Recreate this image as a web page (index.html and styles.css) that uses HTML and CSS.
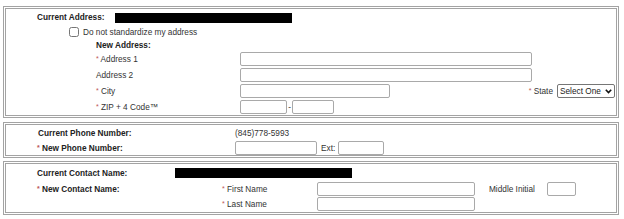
FILE: index.html
```html
<!DOCTYPE html>
<html lang="en">
<head>
  <meta charset="UTF-8">
  <title>Change Account Details</title>
  <link rel="stylesheet" href="styles.css">
</head>
<body>

<div class="page">

  <div class="panel address">
    <div class="row top-row">
      <span class="label bold cur-addr">Current Address:</span>
      <span class="redacted"></span>
    </div>
    <div class="row check-row">
      <input type="checkbox" id="nostd" class="check">
      <label for="nostd">Do not standardize my address</label>
    </div>
    <div class="row sub head-row">
      <span class="label bold">New Address:</span>
    </div>
    <div class="row sub field-row">
      <span class="label addr-label"><span class="req">*</span> Address 1</span>
      <input type="text" class="box addr">
    </div>
    <div class="row sub field-row">
      <span class="label addr-label">Address 2</span>
      <input type="text" class="box addr">
    </div>
    <div class="row sub field-row">
      <span class="label addr-label"><span class="req">*</span> City</span>
      <input type="text" class="box city">
      <span class="state"><span class="req">*</span> State</span>
      <span class="pick-wrap">
        <select class="pick">
          <option>Select One</option>
        </select>
        <svg class="chev" width="7" height="5" viewBox="0 0 7 5">
          <path d="M0.8 0.8 L3.5 3.6 L6.2 0.8" fill="none" stroke="#111" stroke-width="1.6"/>
        </svg>
      </span>
    </div>
    <div class="row sub field-row">
      <span class="label addr-label"><span class="req">*</span> ZIP + 4 Code™</span>
      <input type="text" class="box zip5">
      <span class="dash">-</span>
      <input type="text" class="box zip4">
    </div>
  </div>

  <div class="panel phone">
    <div class="row phone-cur">
      <span class="label bold phone-label">Current Phone Number:</span>
      <span>(845)778-5993</span>
    </div>
    <div class="row phone-new">
      <span class="label bold phone-label"><span class="req">*</span> New Phone Number:</span>
      <input type="text" class="box phone-box">
      <span class="ext">Ext:</span>
      <input type="text" class="box ext-box">
    </div>
  </div>

  <div class="panel contact">
    <div class="row contact-cur">
      <span class="label bold cur-contact">Current Contact Name:</span>
      <span class="redacted"></span>
    </div>
    <div class="row name-row">
      <span class="label bold contact-label"><span class="req">*</span> New Contact Name:</span>
      <span class="label name-label"><span class="req">*</span> First Name</span>
      <input type="text" class="box name-box">
      <span class="middle">Middle Initial</span>
      <input type="text" class="box mi-box">
    </div>
    <div class="row name-row last">
      <span class="label name-label"><span class="req">*</span> Last Name</span>
      <input type="text" class="box name-box">
    </div>
  </div>

</div>

</body>
</html>
```

FILE: styles.css
```css
body {
  margin: 0;
  font-family: "Liberation Sans", Arial, sans-serif;
  font-size: 8.25px;
  color: #333;
  background: #fff;
}
.page {
  padding: 6px 0 0 3px;
}
.panel {
  width: 616px;
  box-sizing: border-box;
  border: 3px double #a3a3a3;
  padding-left: 31px;
  margin-bottom: 4px;
}
.row {
  display: flex;
  align-items: center;
}
.label {
  flex: none;
}
.bold {
  font-weight: bold;
  color: #222;
}
.req {
  color: #b55;
  font-size: 7px;
  vertical-align: 1px;
}
.redacted {
  display: inline-block;
  width: 177px;
  height: 10px;
  background: #000;
}
.box {
  box-sizing: border-box;
  height: 14px;
  margin: 0;
  padding: 0 2px;
  border: 1px solid #a9a9a9;
  border-radius: 2px;
  background: #fff;
  font: inherit;
}

/* address panel */
.address {
  padding-top: 1px;
}
.top-row {
  height: 15px;
}
.cur-addr {
  width: 78px;
}
.check-row {
  height: 14px;
  padding-left: 32px;
}
.check {
  width: 10px;
  height: 10px;
  margin: 0 4px 0 0;
}
.sub {
  padding-left: 59px;
}
.head-row {
  height: 12px;
}
.field-row {
  height: 16px;
}
.addr-label {
  width: 144px;
}
.addr {
  width: 292px;
}
.city {
  width: 150px;
}
.state {
  margin-left: auto;
  margin-right: 4px;
}
.pick-wrap {
  position: relative;
  display: flex;
  margin-right: 1px;
}
.pick {
  appearance: none;
  -webkit-appearance: none;
  height: 14px;
  width: 58px;
  padding: 0 10px 0 2px;
  border: 1px solid #767676;
  border-radius: 2px;
  font: inherit;
  color: #222;
  background: #fff;
}
.chev {
  position: absolute;
  right: 3px;
  top: 5px;
  pointer-events: none;
}
.zip5 {
  width: 47px;
}
.dash {
  width: 5px;
  text-align: center;
}
.zip4 {
  width: 42px;
}

/* phone panel */
.phone {
  margin-bottom: 3px;
}
.phone-cur {
  height: 16px;
  padding-left: 1px;
}
.phone-new {
  height: 14px;
}
.phone-label {
  width: 198px;
}
.phone-cur .phone-label {
  width: 197px;
}
.phone-box {
  width: 82px;
}
.ext {
  margin: 0 3px 0 4px;
}
.ext-box {
  width: 46px;
}

/* contact panel */
.contact-cur {
  height: 18px;
}
.cur-contact {
  width: 138px;
}
.name-row {
  height: 14px;
}
.name-row.last {
  height: 16px;
  padding-left: 185px;
}
.contact-label {
  width: 185px;
}
.name-label {
  width: 95px;
}
.name-box {
  width: 158px;
}
.middle {
  margin-left: 14px;
  width: 58px;
}
.mi-box {
  width: 29px;
}
```
